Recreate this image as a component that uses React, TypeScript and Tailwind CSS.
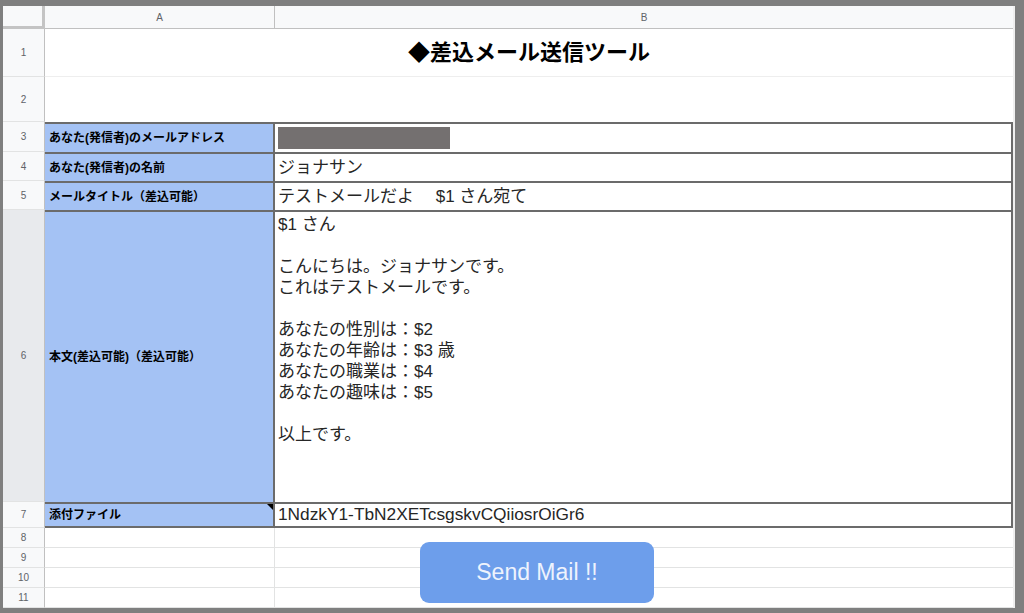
import React from "react";

const font = "font-['Liberation_Sans','Noto_Sans_CJK_JP',sans-serif]";

function RowHead({ n, h, active }: { n: number; h: string; active?: boolean }) {
  return (
    <div
      className={`${h} w-[42px] shrink-0 flex items-center justify-center text-[10px] text-[#5f6368] border-r border-b border-r-[#c0c0c0] border-b-[#e2e3e3] ${
        active ? "bg-[#e8eaed]" : "bg-[#f8f9fa]"
      }`}
    >
      {n}
    </div>
  );
}

function DataRow({
  n,
  h,
  label,
  children,
  last,
  active,
  note,
  top,
}: {
  n: number;
  h: string;
  label: string;
  children?: React.ReactNode;
  last?: boolean;
  active?: boolean;
  note?: boolean;
  top?: boolean;
}) {
  return (
    <div className={`flex ${h}`}>
      <RowHead n={n} h="h-full" active={active} />
      <div
        className={`relative w-[230px] shrink-0 bg-[#a4c2f4] border-t-2 border-r-2 border-[#6b6b6b] ${
          last ? "border-b-2" : ""
        } flex items-center pl-[4px] text-[12px] font-bold text-black`}
      >
        {label}
        {note && (
          <div className="absolute top-0 right-0 w-0 h-0 border-t-[6px] border-l-[6px] border-t-black border-l-transparent" />
        )}
      </div>
      <div
        className={`flex-1 border-t-2 border-r-2 border-[#6b6b6b] ${
          last ? "border-b-2" : ""
        } flex ${top ? "items-start" : "items-center"} pl-[3px] text-[17px] text-[#262626]`}
      >
        {children}
      </div>
    </div>
  );
}

function EmptyRow({ n }: { n: number }) {
  return (
    <div className="flex h-[20px]">
      <RowHead n={n} h="h-full" />
      <div className="w-[230px] shrink-0 border-r border-b border-[#e2e3e3]" />
      <div className="flex-1 border-b border-[#e2e3e3]" />
    </div>
  );
}

export default function App() {
  const body = [
    "$1 さん",
    "",
    "こんにちは。ジョナサンです。",
    "これはテストメールです。",
    "",
    "あなたの性別は：$2",
    "あなたの年齢は：$3 歳",
    "あなたの職業は：$4",
    "あなたの趣味は：$5",
    "",
    "以上です。",
  ];
  return (
    <div className={`w-[1024px] h-[613px] bg-[#7f7f7f] pt-[6px] pl-[3px] pr-[9px] pb-[5px] ${font}`}>
      <div className="relative h-full bg-white flex flex-col border-r-2 border-[#efefef] overflow-hidden">
        {/* column header */}
        <div className="flex h-[23px] shrink-0 bg-[#f8f9fa] border-b border-[#c0c0c0]">
          <div className="w-[42px] shrink-0 h-[23px] border-r-[3px] border-b-[3px] border-[#c4c4c4] bg-[#f8f9fa]" />
          <div className="w-[230px] shrink-0 flex items-center justify-center text-[10px] text-[#5f6368] border-r border-[#c0c0c0]">
            A
          </div>
          <div className="flex-1 flex items-center justify-center text-[10px] text-[#5f6368]">B</div>
        </div>

        {/* row 1 */}
        <div className="flex h-[48px] shrink-0">
          <RowHead n={1} h="h-full" />
          <div className="flex-1 border-b border-[#eeeeee] flex items-center justify-center text-[22px] font-bold text-black">
            ◆差込メール送信ツール
          </div>
        </div>
        {/* row 2 */}
        <div className="flex h-[45px] shrink-0">
          <RowHead n={2} h="h-full" />
          <div className="flex-1" />
        </div>

        <DataRow n={3} h="h-[30px]" label="あなた(発信者)のメールアドレス">
          <div className="w-[172px] h-[22px] bg-[#747070]" />
        </DataRow>
        <DataRow n={4} h="h-[29px]" label="あなた(発信者)の名前">
          ジョナサン
        </DataRow>
        <DataRow n={5} h="h-[29px]" label="メールタイトル（差込可能）">
          テストメールだよ　 $1 さん宛て
        </DataRow>
        <DataRow n={6} h="h-[292px]" label="本文(差込可能)（差込可能）" active top>
          <div className="pt-[2px] leading-[21px]">
            {body.map((l, i) => (
              <div key={i} className="h-[21px] whitespace-pre">
                {l}
              </div>
            ))}
          </div>
        </DataRow>
        <DataRow n={7} h="h-[26px]" label="添付ファイル" last note>
          <span className="text-[17.3px]">1NdzkY1-TbN2XETcsgskvCQiiosrOiGr6</span>
        </DataRow>

        <EmptyRow n={8} />
        <EmptyRow n={9} />
        <EmptyRow n={10} />
        <EmptyRow n={11} />

        <button className="absolute left-[417px] top-[536px] w-[234px] h-[61px] rounded-[9px] bg-[#6d9eeb] text-[#eef3fd] text-[23px] flex items-center justify-center font-['Liberation_Sans',sans-serif]">
          Send Mail !!
        </button>
      </div>
    </div>
  );
}
